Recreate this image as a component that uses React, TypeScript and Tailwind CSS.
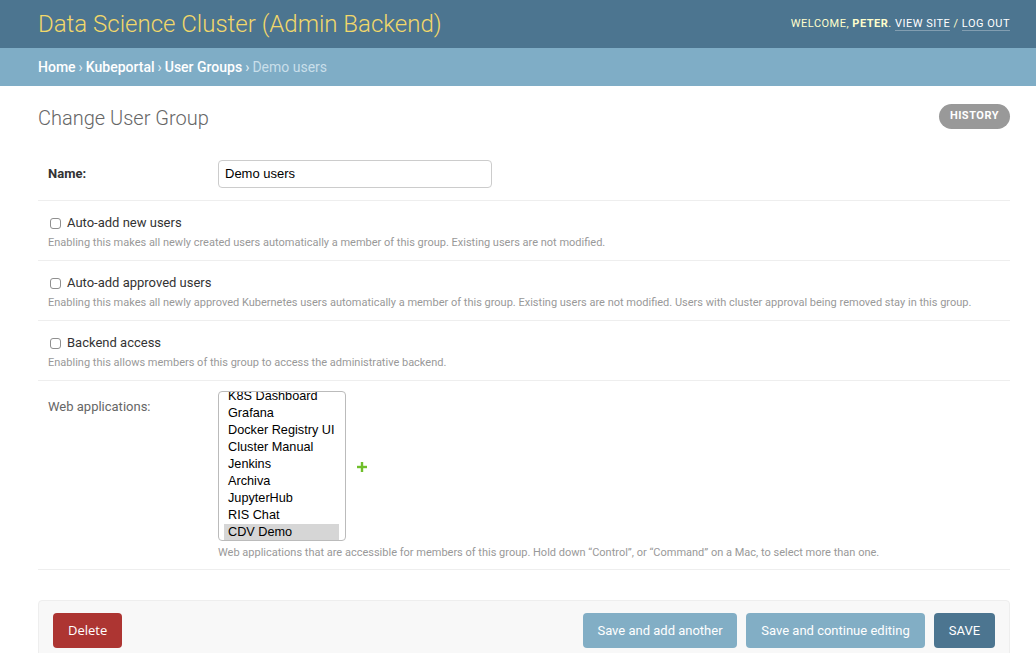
import React from "react";

const roboto = { fontFamily: "Roboto, 'Liberation Sans', sans-serif" };

function CheckRow({ label, help }: { label: string; help: string }) {
  return (
    <div className="border-b border-[#eeeeee] px-[10px] pt-[13px] pb-[9px]">
      <div className="flex items-center h-[18px]">
        <span className="w-[11px] h-[11px] ml-[2px] mr-[6px] rounded-[3px] border border-[#8f8f8f] bg-white" />
        <span className="text-[13px] text-[#333333]">{label}</span>
      </div>
      <div className="mt-[3px] text-[11px] leading-[16px] text-[#999999]">{help}</div>
    </div>
  );
}

export default function App() {
  const apps = [
    "K8S Dashboard",
    "Grafana",
    "Docker Registry UI",
    "Cluster Manual",
    "Jenkins",
    "Archiva",
    "JupyterHub",
    "RIS Chat",
    "CDV Demo",
  ];
  return (
    <div className="min-h-[700px] bg-white text-[#333333]" style={roboto}>
      <header className="h-[48px] bg-[#4c7590] flex items-center justify-between pl-[38px] pr-[26px]">
        <h1 className="text-[24px] font-light text-[#f2d86a] leading-none">
          Data Science Cluster (Admin Backend)
        </h1>
        <div className="text-[11px] tracking-[0.5px] uppercase text-[#ffffcc] pt-[1px]">
          Welcome, <strong className="font-bold">Peter</strong>.{" "}
          <span className="text-white border-b border-[rgba(255,255,255,0.3)]">View site</span>
          <span> / </span>
          <span className="text-white border-b border-[rgba(255,255,255,0.3)]">Log out</span>
        </div>
      </header>
      <div className="h-[38px] bg-[#7fadc6] flex items-center px-[38px] text-[14px] text-[#e3eff5]">
        <span className="text-white font-medium">Home</span>
        <span className="mx-[3px]">›</span>
        <span className="text-white font-medium">Kubeportal</span>
        <span className="mx-[3px]">›</span>
        <span className="text-white font-medium">User Groups</span>
        <span className="mx-[3px]">›</span>
        <span className="text-[#c9dfea]">Demo users</span>
      </div>

      <div className="pl-[38px] pr-[26px]">
        <div className="flex items-start justify-between pt-[17px] pb-[10px]">
          <h2 className="text-[20px] font-light text-[#666666] leading-[30px]">Change User Group</h2>
          <span className="mt-[1px] h-[25px] px-[11px] rounded-full bg-[#999999] text-white text-[11px] font-bold tracking-[0.5px] flex items-center">
            HISTORY
          </span>
        </div>

        <div className="mt-[7px]">
          <div className="border-b border-[#eeeeee] px-[10px] pt-[10px] pb-[12px] flex items-center">
            <label className="w-[170px] text-[13px] font-bold text-[#333333]">Name:</label>
            <div
              className="w-[274px] h-[28px] rounded-[4px] border border-[#cccccc] flex items-center px-[6px] text-[13px] text-black"
              style={{ fontFamily: "'Liberation Sans', Arial, sans-serif" }}
            >
              Demo users
            </div>
          </div>

          <CheckRow
            label="Auto-add new users"
            help="Enabling this makes all newly created users automatically a member of this group. Existing users are not modified."
          />
          <CheckRow
            label="Auto-add approved users"
            help="Enabling this makes all newly approved Kubernetes users automatically a member of this group. Existing users are not modified. Users with cluster approval being removed stay in this group."
          />
          <CheckRow
            label="Backend access"
            help="Enabling this allows members of this group to access the administrative backend."
          />

          <div className="border-b border-[#eeeeee] px-[10px] pt-[10px] pb-[8px]">
            <div className="flex">
              <label className="w-[170px] text-[13px] text-[#666666] pt-[6px]">Web applications:</label>
              <div className="flex items-center">
                <div
                  className="w-[128px] h-[150px] rounded-[4px] border border-[#bbbbbb] overflow-hidden pl-[5px] pr-[6px]"
                  style={{ fontFamily: "'Liberation Sans', Arial, sans-serif" }}
                >
                  <div className="mt-[-4px]">
                    {apps.map((a) => (
                      <div
                        key={a}
                        className={
                          "h-[17px] leading-[17px] pl-[4px] text-[12.7px] text-black whitespace-nowrap " +
                          (a === "CDV Demo" ? "bg-[#d6d6d6]" : "")
                        }
                      >
                        {a}
                      </div>
                    ))}
                  </div>
                </div>
                <svg width="10" height="10" viewBox="0 0 10 10" className="ml-[11px] mt-[2px]">
                  <rect x="3.8" y="0" width="2.4" height="10" fill="#70bf2b" />
                  <rect x="0" y="3.8" width="10" height="2.4" fill="#70bf2b" />
                </svg>
              </div>
            </div>
            <div className="ml-[170px] mt-[4px] text-[11px] leading-[16px] text-[#999999]">
              Web applications that are accessible for members of this group. Hold down “Control”, or “Command” on a Mac, to select more than one.
            </div>
          </div>
        </div>

        <div className="mt-[30px] h-[80px] rounded-[4px] border border-[#eeeeee] bg-[#f8f8f8] px-[14px] pt-[12px] flex justify-between items-start">
          <span
            className="h-[35px] px-[15px] rounded-[4px] bg-[#ad3532] text-white text-[13px] flex items-center"
            style={{ fontFamily: "'Open Sans', Roboto, sans-serif" }}
          >
            Delete
          </span>
          <div className="flex gap-[9px]">
            <span className="h-[35px] w-[154px] justify-center rounded-[4px] bg-[#82aec5] text-white text-[13px] flex items-center">
              Save and add another
            </span>
            <span className="h-[35px] w-[179px] justify-center rounded-[4px] bg-[#82aec5] text-white text-[13px] flex items-center">
              Save and continue editing
            </span>
            <span className="h-[35px] w-[61px] justify-center rounded-[4px] bg-[#4c7590] text-white text-[13px] flex items-center">
              SAVE
            </span>
          </div>
        </div>
      </div>
    </div>
  );
}
